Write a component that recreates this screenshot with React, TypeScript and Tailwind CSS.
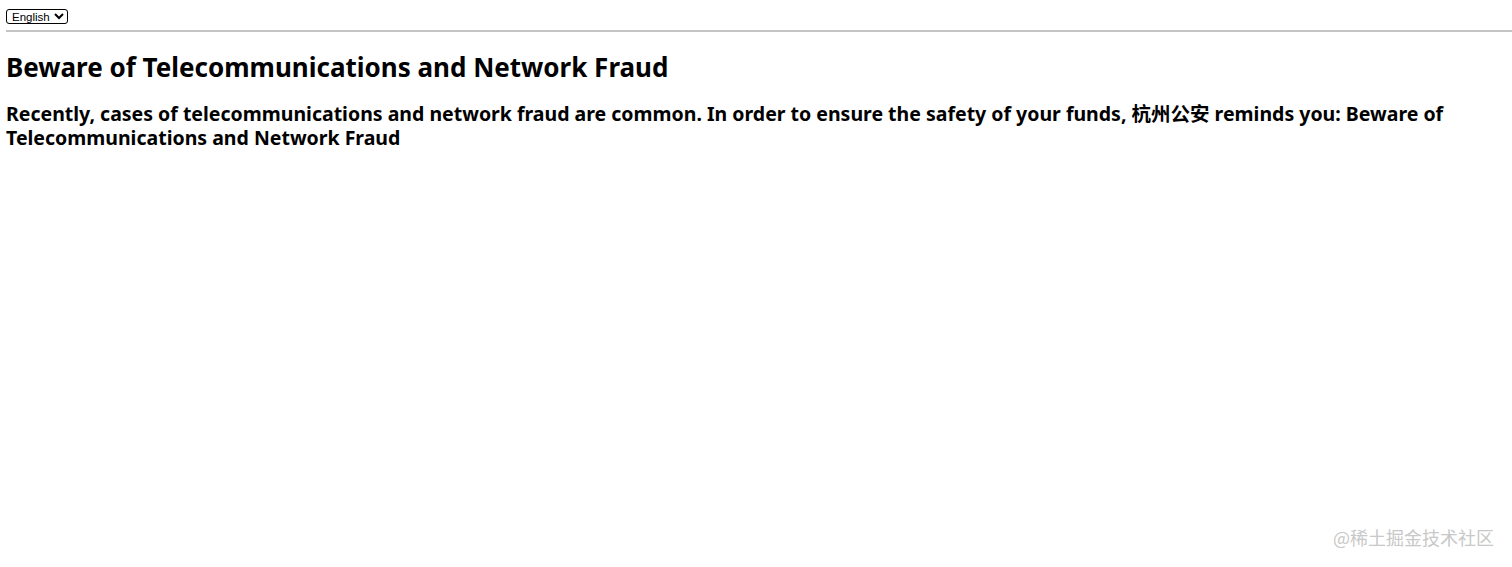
export default function App() {
  return (
    <div className="relative min-h-[567px] bg-white pl-[6px] pt-[9px] text-black [font-family:'Noto_Sans','Noto_Sans_CJK_SC',sans-serif]">
      <select
        defaultValue="en"
        className="block h-[15px] w-[62px] rounded-[3px] border border-black bg-white px-[1px] text-[11.5px] leading-none [font-family:'Liberation_Sans',sans-serif]"
      >
        <option value="en">English</option>
        <option value="zh">中文</option>
      </select>
      <hr className="mt-[6px] border-t-2 border-[#c4c4c4]" />
      <h2 className="mt-[18px] text-[26px] font-bold leading-[34px]">
        Beware of Telecommunications and Network Fraud
      </h2>
      <div className="pr-[6px]">
        <h3 className="mt-[18px] text-[19.5px] font-bold leading-[24px]">
          Recently, cases of telecommunications and network fraud are common. In order to ensure the safety of your funds, 杭州公安 reminds you: Beware of Telecommunications and Network Fraud
        </h3>
      </div>
      <div className="absolute bottom-[16px] right-[18px] text-[18px] text-[#c8c8c8] [font-family:'Noto_Sans_CJK_SC',sans-serif]">
        @稀土掘金技术社区
      </div>
    </div>
  );
}
